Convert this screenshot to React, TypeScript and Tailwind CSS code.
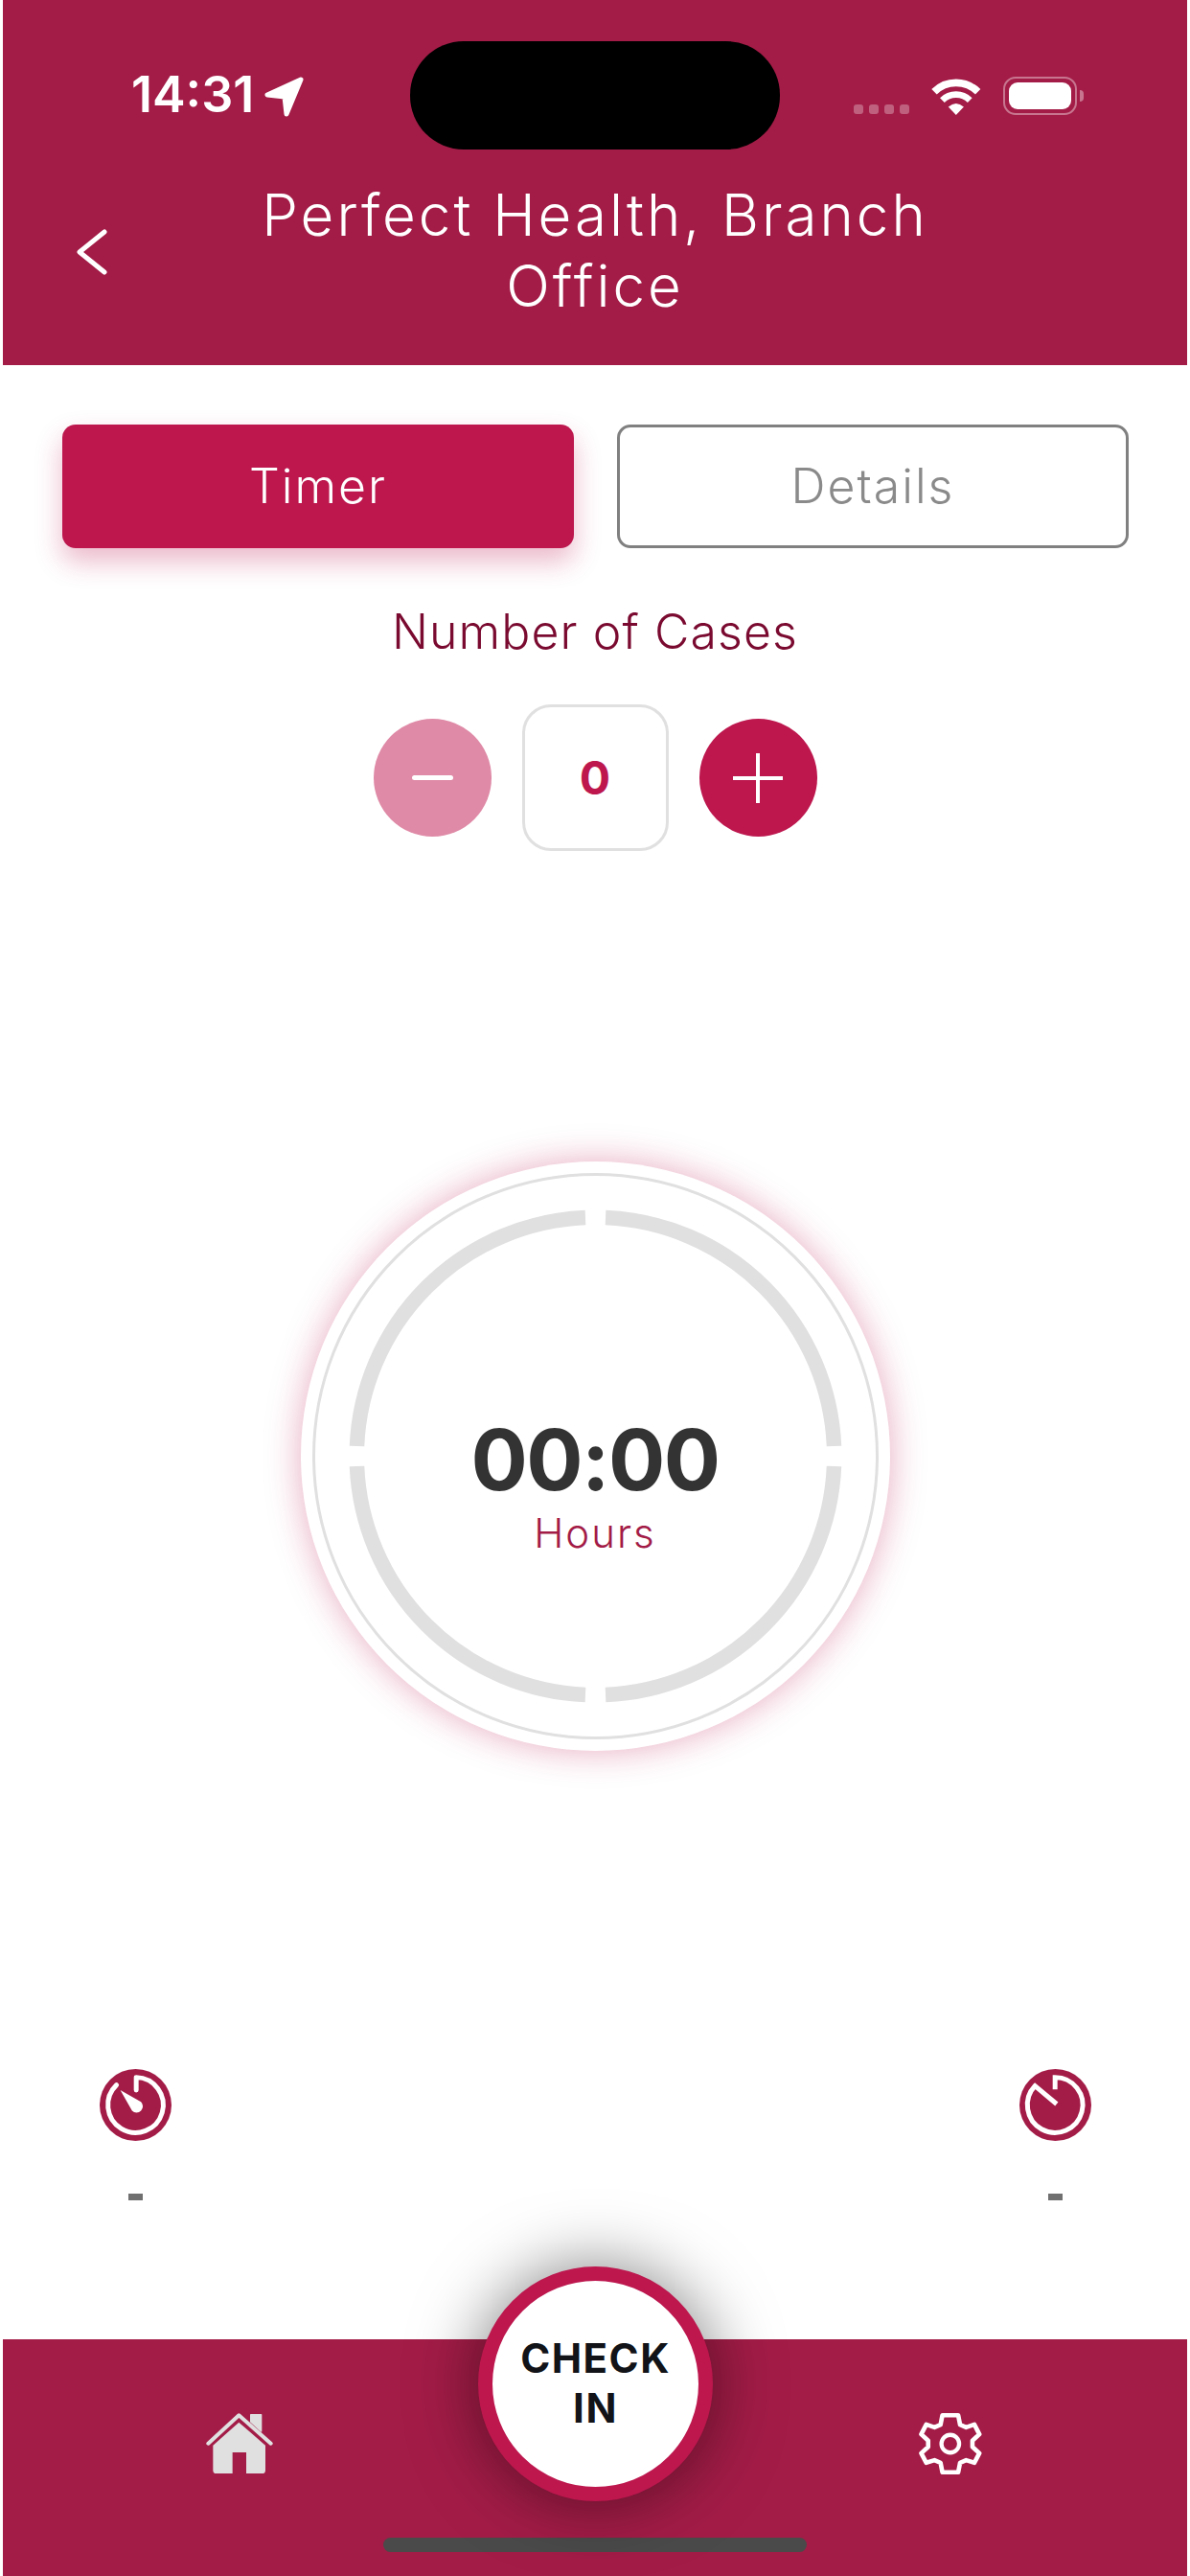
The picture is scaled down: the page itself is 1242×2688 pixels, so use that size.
const TimerIcon = ({ variant }: { variant: 'start' | 'end' }) => (
  <svg viewBox="130 87 226 226" className="w-[75px] h-[75px]">
    <circle cx="243" cy="200" r="113" fill="#A31C47" />
    {variant === 'start' ? (
      <>
        <path
          d="M245 153V113A87 87 0 1 1 183 137"
          fill="none"
          stroke="#fff"
          strokeWidth="15"
          strokeLinecap="round"
          strokeLinejoin="round"
        />
        <path d="M195 153L260 190A19 19 0 0 1 232 218Z" fill="#fff" />
      </>
    ) : (
      <path
        d="M242 151V113A87 87 0 1 1 179 140L247 197"
        fill="none"
        stroke="#fff"
        strokeWidth="15"
      />
    )}
  </svg>
);

const App = () => {
  return (
    <div className="w-[1242px] h-[2688px] px-[3px] bg-white flex flex-col font-[Inter,sans-serif] overflow-hidden relative">
      {/* header */}
      <div className="h-[381px] shrink-0 bg-[#A31C47] text-white">
        <div className="pt-[43px] grid grid-cols-[1fr_386px_1fr] h-[156px]">
          <div className="pl-[134px] pt-[30px] flex items-start gap-[10px]">
            <span className="text-[52px] leading-[52px] font-semibold">14:31</span>
            <svg viewBox="0 0 42 42" className="w-[42px] h-[42px] mt-[7px]">
              <path
                d="M39 3L4 19L22 21L24 39Z"
                fill="#fff"
                stroke="#fff"
                strokeWidth="5"
                strokeLinejoin="round"
              />
            </svg>
          </div>
          <div className="bg-black rounded-[56px] h-[113px]" />
          <div className="flex items-start justify-end pr-[108px] pt-[37px]">
            <div className="flex gap-[6px] mt-[29px] mr-[23px]">
              <div className="w-[10px] h-[10px] rounded-[3px] bg-white/30" />
              <div className="w-[10px] h-[10px] rounded-[3px] bg-white/30" />
              <div className="w-[10px] h-[10px] rounded-[3px] bg-white/30" />
              <div className="w-[10px] h-[10px] rounded-[3px] bg-white/30" />
            </div>
            <svg viewBox="335 92 155 116" className="w-[52px] h-[39px] mt-px">
              <g fill="none" stroke="#fff">
                <path d="M344 136A97 97 0 0 1 480 136" strokeWidth="23" />
                <path d="M369 162A61 61 0 0 1 455 162" strokeWidth="20" />
              </g>
              <path d="M412 208L388 183Q412 162 436 183Z" fill="#fff" />
            </svg>
            <div className="ml-[23px] w-[77px] h-[40px] rounded-[13px] border-[2px] border-white/40 p-[4px]">
              <div className="w-full h-full rounded-[9px] bg-white" />
            </div>
            <div className="w-[4px] h-[12px] mt-[14px] ml-[3px] rounded-r-full bg-white/40" />
          </div>
        </div>
        <div className="grid grid-cols-[1fr_760px_1fr] pt-[31px]">
          <div className="flex items-center pl-[75px]">
            <svg viewBox="0 0 36 50" className="w-[36px] h-[50px] mt-[4px]">
              <path
                d="M31 4L5 25L31 46"
                fill="none"
                stroke="#fff"
                strokeWidth="5"
                strokeLinecap="round"
                strokeLinejoin="round"
              />
            </svg>
          </div>
          <div className="text-[60px] leading-[74px] font-light text-center tracking-[3px]">
            Perfect Health, Branch Office
          </div>
        </div>
      </div>

      {/* tabs */}
      <div className="flex gap-[45px] pl-[62px] mt-[62px]">
        <div className="w-[534px] h-[129px] rounded-[14px] bg-[#BD174E] text-white flex items-center justify-center text-[50px] font-light tracking-[2px] shadow-[0_14px_28px_rgba(189,23,78,0.3)]">
          Timer
        </div>
        <div className="w-[534px] h-[129px] rounded-[14px] border-[3px] border-[#808080] text-[#8a8a8a] flex items-center justify-center text-[50px] font-light tracking-[2px]">
          Details
        </div>
      </div>

      {/* cases */}
      <div className="mt-[55px] text-center text-[50px] leading-[64px] font-light text-[#7A0A30] tracking-[1.1px]">
        Number of Cases
      </div>
      <div className="mt-[44px] flex items-center justify-center gap-[32px]">
        <div className="w-[123px] h-[123px] rounded-full bg-[#DF8AA6] flex items-center justify-center">
          <div className="w-[43px] h-[5px] rounded-full bg-white" />
        </div>
        <div className="w-[153px] h-[153px] rounded-[30px] border-[3px] border-[#e0e0e0] flex items-center justify-center text-[48px] font-bold text-[#BD174E]">
          0
        </div>
        <div className="w-[123px] h-[123px] rounded-full bg-[#BD174E] flex items-center justify-center">
          <svg viewBox="0 0 52 52" className="w-[52px] h-[52px]">
            <path d="M0 26H52M26 0V52" stroke="#fff" strokeWidth="4" strokeLinecap="round" />
          </svg>
        </div>
      </div>

      {/* timer dial */}
      <div className="mt-[324px] flex justify-center">
        <div className="w-[615px] h-[615px] rounded-full bg-white p-[12px] shadow-[0_0_36px_rgba(189,23,78,0.36)]">
          <div className="relative w-full h-full rounded-full border-[3px] border-[#e0e0e0] flex flex-col items-center justify-center">
            <svg
              viewBox="-257 -257 514 514"
              className="absolute left-[35px] top-[35px] w-[515px] h-[515px]"
            >
              <path
                d="M10.5 -248.5A248.75 248.75 0 0 1 248.5 -10.5M248.5 10.5A248.75 248.75 0 0 1 10.5 248.5M-10.5 248.5A248.75 248.75 0 0 1 -248.5 10.5M-248.5 -10.5A248.75 248.75 0 0 1 -10.5 -248.5"
                fill="none"
                stroke="#e0e0e0"
                strokeWidth="15.5"
              />
            </svg>
            <div className="text-[88px] leading-[90px] font-bold text-[#333333] mt-[66px] tracking-[-1.5px]">
              00:00
            </div>
            <div className="text-[42px] leading-[56px] font-light text-[#A31C47] tracking-[2px] mt-[4px]">
              Hours
            </div>
          </div>
        </div>
      </div>

      {/* start / end times */}
      <div className="mt-[332px] pl-[101px] pr-[100px] flex justify-between">
        <div className="w-[75px] flex flex-col items-center">
          <TimerIcon variant="start" />
          <div className="w-[15px] h-[7px] bg-[#707070] mt-[55px]" />
        </div>
        <div className="w-[75px] flex flex-col items-center">
          <TimerIcon variant="end" />
          <div className="w-[15px] h-[7px] bg-[#707070] mt-[55px]" />
        </div>
      </div>

      {/* bottom bar */}
      <div className="mt-auto h-[247px] shrink-0 bg-[#A31C47] relative">
        <div className="flex justify-between pl-[212px] pr-[213px] pt-[76px]">
          <svg viewBox="105 112 210 195" className="w-[70px] h-[65px]">
            <path d="M245 120H278V172L245 142Z" fill="#e0e0e0" stroke="#e0e0e0" strokeWidth="4" strokeLinejoin="round" />
            <path d="M112 210L208 122L308 210" fill="none" stroke="#e0e0e0" strokeWidth="12" strokeLinecap="round" strokeLinejoin="round" />
            <path
              d="M208 144L291 216V294Q291 304 281 304H231V238H188V304H137Q127 304 127 294V216Z"
              fill="#e0e0e0"
            />
          </svg>
          <svg viewBox="110 108 205 200" className="w-[68px] h-[66px]">
            <path
              d="M187 118H237L243 148L262 156L288 147L304 178L282 198V218L304 238L288 268L262 260L243 268L237 298H187L181 268L162 260L136 268L120 238L142 218V198L120 178L136 147L162 156L181 148Z"
              fill="none"
              stroke="#fff"
              strokeWidth="14"
              strokeLinejoin="round"
            />
            <circle cx="212" cy="208" r="28" fill="none" stroke="#fff" strokeWidth="13" />
          </svg>
        </div>
        <div className="absolute left-[397px] top-[207px] w-[442px] h-[15px] rounded-full bg-[#4a4a4a]" />
        {/* check in overlaps the bar */}
        <div className="absolute left-[496px] top-[-76px] w-[245px] h-[245px] rounded-full border-[15px] border-[#BD174E] bg-white flex items-center justify-center text-center text-[42px] leading-[52px] font-bold tracking-[1.5px] text-[#111318] shadow-[0_0_70px_rgba(0,0,0,0.5)]">
          <div className="mt-[-2px]">
            CHECK
            <br />
            IN
          </div>
        </div>
      </div>
    </div>
  );
};

export default App;
